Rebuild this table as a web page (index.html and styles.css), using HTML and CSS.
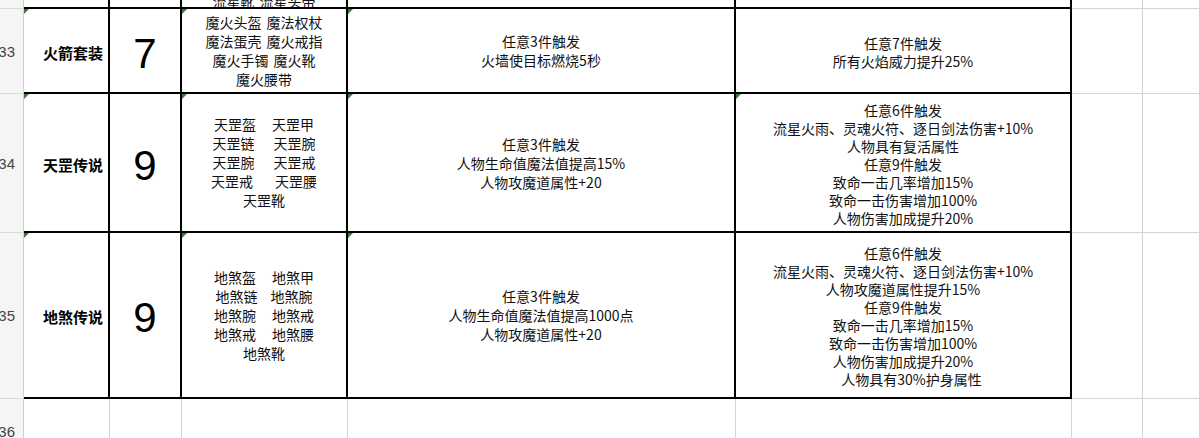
FILE: index.html
```html
<!DOCTYPE html>
<html lang="zh-CN">
<head>
<meta charset="utf-8">
<title>套装属性</title>
<link rel="stylesheet" href="styles.css">
</head>
<body>
<div class="sheet">
  <!-- row 32 (clipped) -->
  <div class="rh"></div>
  <div class="c k"></div>
  <div class="c k"></div>
  <div class="c k clip"><div class="ln g5"><span>流星靴</span><span>流星头带</span></div></div>
  <div class="c k"></div>
  <div class="c k"></div>
  <div class="c"></div>
  <div class="c"></div>

  <!-- row 33 -->
  <div class="rh">33</div>
  <div class="c k name tri">火箭套装</div>
  <div class="c k big">7</div>
  <div class="c k items tri">
    <div class="ln g5"><span>魔火头盔</span><span>魔法权杖</span></div>
    <div class="ln g5"><span>魔法蛋壳</span><span>魔火戒指</span></div>
    <div class="ln g5"><span>魔火手镯</span><span>魔火靴</span></div>
    <div class="ln"><span>魔火腰带</span></div>
  </div>
  <div class="c k mid tri">
    <div>任意3件触发</div>
    <div>火墙使目标燃烧5秒</div>
  </div>
  <div class="c k eff">
    <div>任意7件触发</div>
    <div>所有火焰威力提升25%</div>
  </div>
  <div class="c"></div>
  <div class="c"></div>

  <!-- row 34 -->
  <div class="rh">34</div>
  <div class="c k name tri">天罡传说</div>
  <div class="c k big">9</div>
  <div class="c k items tri">
    <div class="ln g16"><span>天罡盔</span><span>天罡甲</span></div>
    <div class="ln g19"><span>天罡链</span><span>天罡腕</span></div>
    <div class="ln g19"><span>天罡腕</span><span>天罡戒</span></div>
    <div class="ln g22"><span>天罡戒</span><span>天罡腰</span></div>
    <div class="ln"><span>天罡靴</span></div>
  </div>
  <div class="c k mid tri">
    <div>任意3件触发</div>
    <div>人物生命值魔法值提高15%</div>
    <div>人物攻魔道属性+20</div>
  </div>
  <div class="c k eff tri">
    <div>任意6件触发</div>
    <div>流星火雨、灵魂火符、逐日剑法伤害+10%</div>
    <div>人物具有复活属性</div>
    <div>任意9件触发</div>
    <div>致命一击几率增加15%</div>
    <div>致命一击伤害增加100%</div>
    <div>人物伤害加成提升20%</div>
  </div>
  <div class="c"></div>
  <div class="c"></div>

  <!-- row 35 -->
  <div class="rh">35</div>
  <div class="c k name tri">地煞传说</div>
  <div class="c k big">9</div>
  <div class="c k items tri">
    <div class="ln g16"><span>地煞盔</span><span>地煞甲</span></div>
    <div class="ln g13"><span>地煞链</span><span>地煞腕</span></div>
    <div class="ln g16"><span>地煞腕</span><span>地煞戒</span></div>
    <div class="ln g16"><span>地煞戒</span><span>地煞腰</span></div>
    <div class="ln"><span>地煞靴</span></div>
  </div>
  <div class="c k mid tri">
    <div>任意3件触发</div>
    <div>人物生命值魔法值提高1000点</div>
    <div>人物攻魔道属性+20</div>
  </div>
  <div class="c k eff">
    <div>任意6件触发</div>
    <div>流星火雨、灵魂火符、逐日剑法伤害+10%</div>
    <div>人物攻魔道属性提升15%</div>
    <div>任意9件触发</div>
    <div>致命一击几率增加15%</div>
    <div>致命一击伤害增加100%</div>
    <div>人物伤害加成提升20%</div>
    <div class="indent">人物具有30%护身属性</div>
  </div>
  <div class="c"></div>
  <div class="c"></div>

  <!-- row 36 -->
  <div class="rh">36</div>
  <div class="c"></div>
  <div class="c"></div>
  <div class="c"></div>
  <div class="c"></div>
  <div class="c"></div>
  <div class="c"></div>
  <div class="c"></div>
</div>
</body>
</html>
```

FILE: styles.css
```css
* {
  box-sizing: border-box;
}

html, body {
  margin: 0;
  padding: 0;
  background: #ffffff;
  overflow: hidden;
}

body {
  font-family: "Noto Sans CJK SC", "Noto Sans", sans-serif;
  font-size: 14px;
  color: #111111;
}

.sheet {
  display: grid;
  grid-template-columns: 24px 86px 72px 166px 388px 336px 71px 120px;
  grid-template-rows: 9px 85px 139px 166px 66px;
  width: 1263px;
}

.rh {
  background: #f5f5f5;
  border-right: 1px solid #cfcfcf;
  border-bottom: 1px solid #d9d9d9;
  display: flex;
  align-items: center;
  justify-content: flex-end;
  padding-right: 8px;
  font-family: "Liberation Sans", Arial, sans-serif;
  font-size: 15px;
  color: #444444;
  white-space: nowrap;
  overflow: hidden;
}

.c {
  position: relative;
  border-right: 1px solid #d4d4d4;
  border-bottom: 1px solid #d4d4d4;
  display: flex;
  flex-direction: column;
  justify-content: center;
  align-items: center;
  text-align: center;
  white-space: nowrap;
  overflow: hidden;
}

.k {
  border-right: 2px solid #000000;
  border-bottom: 2px solid #000000;
}

.tri::before {
  content: "";
  position: absolute;
  top: 0;
  left: 0;
  border-top: 5px solid #3a7a36;
  border-right: 5px solid transparent;
}

.name {
  align-items: flex-start;
  padding-left: 19px;
  padding-top: 3px;
  font-weight: bold;
  font-size: 15px;
  color: #000000;
}

.big {
  font-family: "Liberation Sans", Arial, sans-serif;
  font-size: 42px;
  line-height: 1;
  padding-top: 6px;
  color: #000000;
}

.items .ln,
.clip .ln {
  display: flex;
  justify-content: center;
  line-height: 19px;
}

.clip {
  justify-content: flex-end;
}

.clip .ln {
  margin-bottom: -4px;
}

.g5 { gap: 5px; }
.g13 { gap: 13px; }
.g16 { gap: 16px; }
.g19 { gap: 19px; }
.g22 { gap: 22px; }

.mid {
  line-height: 19px;
  padding-top: 1px;
}

.eff {
  line-height: 18px;
  padding-top: 2px;
}

.indent {
  padding-left: 17px;
}
```
